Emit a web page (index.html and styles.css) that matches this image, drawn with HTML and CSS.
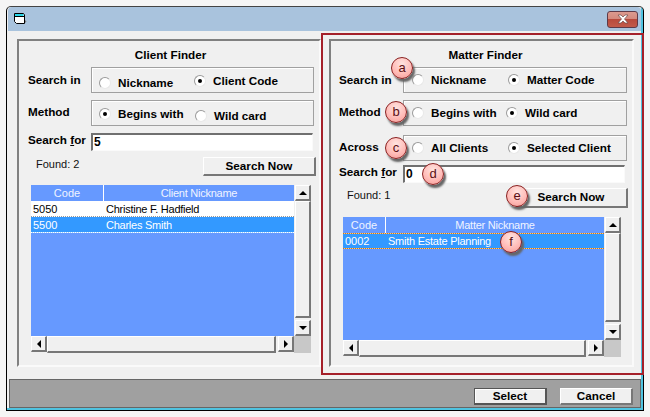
FILE: index.html
```html
<!DOCTYPE html>
<html lang="en">
<head>
<meta charset="utf-8">
<title>Finder</title>
<link rel="stylesheet" href="styles.css">
</head>
<body>
<div class="window">
  <div class="titlebar">
    <svg class="appicon" width="14" height="14" viewBox="0 0 14 14"><path d="M1.500 1.500H10.500L11.500 3V11.500H3.500L1.500 9.500Z" fill="#fff" stroke="#000"/><rect x="2" y="2" width="8.500" height="2" fill="#27d6e8"/><path d="M2 4.500H11.500" stroke="#000" fill="none"/><path d="M12 8l1.500 1.500-1.500 1.500z" fill="#777"/></svg>
    <div class="close"><svg width="16" height="10" viewBox="0 0 16 10"><path d="M3 1l3 0 2 2 2-2 3 0-3.500 4 3.500 4-3 0-2-2-2 2-3 0 3.500-4z" fill="#fff" stroke="#6b4a4a" stroke-width=".7"/></svg></div>
  </div>
  <div class="content">
    <div class="groups">
      <section class="group group-left">
        <h2 class="title">Client Finder</h2>
        <div class="form-row"><span class="label">Search in</span>
          <div class="box">
            <span class="opt w95 down3"><i class="radio"></i>Nickname</span>
            <span class="opt down1"><i class="radio on"></i>Client Code</span>
          </div>
        </div>
        <div class="form-row gap7"><span class="label up1">Method</span>
          <div class="box">
            <span class="opt w96 down1"><i class="radio on"></i>Begins with</span>
            <span class="opt down3"><i class="radio"></i>Wild card</span>
          </div>
        </div>
        <div class="form-row gap7"><span class="label flush">Search <u>f</u>or</span><div class="input">5</div></div>
        <div class="found-row gap6"><span class="found">Found: 2</span><div class="btn btn-search">Search Now</div></div>
        <div class="table table-left">
          <div class="list">
            <div class="thead"><span class="c1">Code</span><span class="c2">Client Nickname</span></div>
            <div class="tr"><span class="c1">5050</span><span class="c2">Christine F. Hadfield</span></div>
            <div class="tr sel"><span class="c1">5500</span><span class="c2">Charles Smith</span></div>
          </div>
          <div class="vbar"><div class="sb"><i class="tri up"></i></div><div class="thumb"></div><div class="sb"><i class="tri dn"></i></div></div>
          <div class="hbar"><div class="sb"><i class="tri lf"></i></div><div class="thumb"></div><div class="sb"><i class="tri rt"></i></div></div>
          <div class="corner"></div>
        </div>
      </section>
      <section class="group group-right">
        <h2 class="title">Matter Finder</h2>
        <div class="form-row"><span class="label">Search in</span>
          <div class="box">
            <span class="opt w96"><i class="radio"></i>Nickname</span>
            <span class="opt"><i class="radio on"></i>Matter Code</span>
          </div>
        </div>
        <div class="form-row gap7"><span class="label up1">Method</span>
          <div class="box">
            <span class="opt w94"><i class="radio"></i>Begins with</span>
            <span class="opt"><i class="radio on"></i>Wild card</span>
          </div>
        </div>
        <div class="form-row gap9"><span class="label up1">Across</span>
          <div class="box">
            <span class="opt w96"><i class="radio"></i>All Clients</span>
            <span class="opt"><i class="radio on"></i>Selected Client</span>
          </div>
        </div>
        <div class="form-row gap4"><span class="label flush">Search <u>f</u>or</span><div class="input">0</div></div>
        <div class="found-row gap5"><span class="found">Found: 1</span><div class="btn btn-search tall">Search Now</div></div>
        <div class="table table-right">
          <div class="list">
            <div class="thead"><span class="c1">Code</span><span class="c2">Matter Nickname</span></div>
            <div class="tr sel focus"><span class="c1">0002</span><span class="c2">Smith Estate Planning</span></div>
          </div>
          <div class="vbar"><div class="sb"><i class="tri up"></i></div><div class="thumb"></div><div class="sb"><i class="tri dn"></i></div></div>
          <div class="hbar"><div class="sb"><i class="tri lf"></i></div><div class="thumb"></div><div class="sb"><i class="tri rt"></i></div></div>
          <div class="corner"></div>
        </div>
      </section>
    </div>
    <div class="footer">
      <div class="btn btn-foot btn-default">Select</div>
      <div class="btn btn-foot">Cancel</div>
    </div>
  </div>
  <div class="highlight"></div>
  <span class="badge b-a">a</span>
  <span class="badge b-b">b</span>
  <span class="badge b-c">c</span>
  <span class="badge b-d">d</span>
  <span class="badge b-e">e</span>
  <span class="badge b-f">f</span>
</div>
</body>
</html>
```
FILE: styles.css
```css
* { box-sizing: border-box; }
html, body { margin: 0; height: 100%; }
body { background: #f5f5f5; padding: 6px 0 0 6px; overflow: hidden; font-family: "Liberation Sans", Arial, sans-serif; font-size: 11px; color: #000; }
.window { position: relative; width: 638px; height: 405px; background: #f0f0f0; border: 1px solid #000; border-radius: 5px 5px 0 0; border-top-color: #444; display: flex; flex-direction: column; box-shadow: inset -2px -2px 0 #4fc3e0; }
.titlebar { height: 24px; flex: none; margin: 0 2px 0 1px; background: #a9c3dd; display: flex; align-items: center; justify-content: space-between; padding: 0 3px 0 5px; border-radius: 4px 4px 0 0; }
.appicon { display: block; margin-top: -1px; }
.close { width: 31px; height: 17px; border: 1px solid #5e3a48; border-radius: 3px; background: linear-gradient(#dc9a8f 0, #d48a7e 45%, #b84a3c 50%, #c25a4a 100%); display: flex; align-items: center; justify-content: center; }
.content { flex: 1; display: flex; flex-direction: column; padding: 8px 2px 2px 0; }
.groups { display: flex; padding-left: 10px; gap: 8px; }
.group { height: 328px; border: 2px solid #808080; border-right: 2px solid #fafafa; border-bottom: 2px solid #fafafa; padding-top: 7px; display: flex; flex-direction: column; }
.group-left { width: 304px; padding-left: 9px; --label: 63px; }
.group-right { width: 305px; padding-left: 8px; --label: 64px; }
.title { margin: 0 0 5px; font-size: 11.7px; line-height: 14px; font-weight: bold; text-align: center; }
.group-left .title { padding-right: 6px; }
.label { width: var(--label); flex: none; margin-top: 6px; font-weight: bold; font-size: 11.7px; line-height: 14px; }
.label.up1 { margin-top: 5px; }
.label.flush { margin-top: 0; }
.form-row { display: flex; align-items: flex-start; }
.box { width: 223px; height: 26px; border: 1px solid #a0a0a0; box-shadow: inset 1px 1px 0 #fff; display: flex; align-items: center; padding-left: 7px; }
.group-right .box { width: 224px; padding-left: 8px; }
.opt { display: flex; align-items: center; gap: 7px; font-size: 11.7px; font-weight: bold; line-height: 14px; white-space: nowrap; }
.w94 { width: 94px; } .w95 { width: 95px; } .w96 { width: 96px; }
.down1 { margin-top: 2px; } .down3 { margin-top: 6px; }
.radio { display: block; flex: none; width: 12px; height: 12px; border-radius: 50%; background: #fff; border: 1px solid #9a9a9a; border-right-color: #e8e8e8; border-bottom-color: #e8e8e8; position: relative; }
.radio.on::after { content: ""; position: absolute; left: 3px; top: 3px; width: 4px; height: 4px; border-radius: 50%; background: #000; }
.input { width: 222px; height: 18px; background: #fff; border: 1px solid #fafafa; border-top: 2px solid #707070; border-left: 2px solid #707070; font-size: 12px; font-weight: bold; line-height: 15px; padding-left: 1px; }
.found-row { display: flex; justify-content: space-between; align-items: flex-start; width: 288px; }
.group-right .found-row { width: 289px; }
.found { margin: 0 0 0 8px; font-size: 11px; line-height: 14px; color: #111; }
.btn { display: flex; align-items: center; justify-content: center; padding-bottom: 2px; font-size: 11.7px; font-weight: bold; background: #f0f0f0; border: 1px solid #fff; border-right: 2px solid #777; border-bottom: 2px solid #777; }
.btn-search { width: 113px; height: 19px; }
.btn-search.tall { height: 20px; }
.gap4 { margin-top: 4px; } .gap5 { margin-top: 5px; } .gap6 { margin-top: 6px; } .gap7 { margin-top: 7px; } .gap9 { margin-top: 9px; }
.table { display: grid; margin-top: 9px; margin-left: 3px; }
.table-left { grid-template-columns: 263px 17px; grid-template-rows: 151px 17px; }
.table-right { margin-left: 4px; grid-template-columns: 261px 17px; grid-template-rows: 123px 17px; }
.list { background: #6699ff; color: #fff; font-size: 11px; line-height: 16px; overflow: hidden; }
.thead, .tr { display: flex; height: 16px; white-space: nowrap; }
.thead { color: #f0f4ff; }
.thead .c1 { width: 73px; text-align: center; border-right: 1px solid #fff; }
.table-right .thead .c1 { width: 43px; }
.thead .c2 { flex: 1; text-align: center; letter-spacing: -.25px; }
.tr { --dots: repeating-linear-gradient(90deg, #999 0 1px, #fff 1px 2px); background: var(--dots) left bottom / 100% 1px no-repeat, #fff; color: #000; line-height: 16px; }
.tr .c1 { width: 73px; padding-left: 2px; }
.table-right .tr .c1 { width: 43px; }
.tr .c2 { padding-left: 2px; letter-spacing: -.25px; }
.tr.sel { --dots: repeating-linear-gradient(90deg, #fff 0 1px, #9fd0ff 1px 2px); background: var(--dots) left bottom / 100% 1px no-repeat, #3399ff; color: #fff; }
.tr.focus { --dots: repeating-linear-gradient(90deg, #d07a10 0 1px, #f0c890 1px 2px); background: var(--dots) left top / 100% 1px no-repeat, var(--dots) left bottom / 100% 1px no-repeat, #3399ff; }
.vbar { display: flex; flex-direction: column; padding-left: 1px; }
.hbar { display: flex; }
.vbar .thumb { flex: 1; margin: 0 0 2px; }
.hbar .thumb { flex: 1; margin: 0 2px 0 0; }
.sb, .thumb { background: #f0f0f0; border: 1px solid #fff; border-right: 2px solid #777; border-bottom: 2px solid #777; }
.sb { flex: none; width: 16px; height: 16px; display: flex; align-items: center; justify-content: center; }
.corner { background: #c8c8c8; }
.tri { display: block; width: 0; height: 0; border: 4px solid transparent; }
.tri.up { border-bottom-color: #000; border-top-width: 0; }
.tri.dn { border-top-color: #000; border-bottom-width: 0; }
.tri.lf { border-right-color: #000; border-left-width: 0; }
.tri.rt { border-left-color: #000; border-right-width: 0; }
.footer { margin: 12px 0 0 2px; width: 632px; height: 29px; background: #a0a0a0; border: 1px solid #666; display: flex; justify-content: flex-end; gap: 13px; padding: 8px 7px 0 0; }
.btn-foot { width: 73px; height: 17px; padding-bottom: 1px; }
.btn-default { border: 1px solid #555; border-right-width: 2px; border-bottom-width: 2px; box-shadow: inset 1px 1px 0 #fff; }
.highlight { position: absolute; left: 314px; top: 26px; width: 323px; height: 342px; border: 2px solid #a5202a; pointer-events: none; }
.badge { position: absolute; width: 22px; height: 22px; border-radius: 50%; border: 1px solid #8a2020; background: radial-gradient(circle at 50% 30%, #ffe4e0 0, #ffb9b5 60%, #f09a96 100%); box-shadow: 2px 3px 2px #666; text-align: center; font-size: 13px; line-height: 19px; color: #5a0f14; }
.b-a { left: 384px; top: 50px; }
.b-b { left: 378px; top: 94px; }
.b-c { left: 378px; top: 130px; }
.b-d { left: 415px; top: 156px; }
.b-e { left: 499px; top: 178px; }
.b-f { left: 493px; top: 224px; }
```
